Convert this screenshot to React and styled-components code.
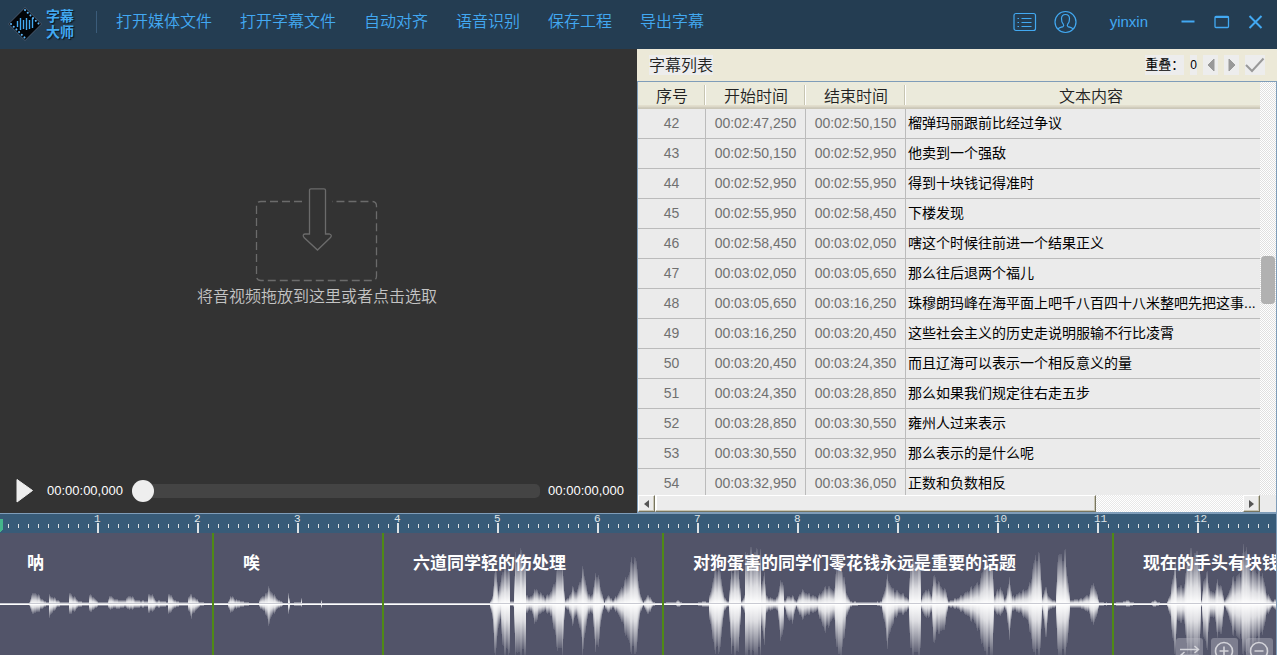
import React, { useEffect, useState } from 'react';
import styled, { createGlobalStyle } from 'styled-components';

const Global = createGlobalStyle`
  *, *::before, *::after { box-sizing: border-box; }
  html, body, #root { height: 100%; }
  body {
    margin: 0;
    overflow: hidden;
    font-family: "Liberation Sans", "Noto Sans CJK SC", sans-serif;
    font-size: 14px;
  }
  button {
    font: inherit;
    color: inherit;
    background: none;
    border: 0;
    padding: 0;
    display: flex;
    align-items: center;
    justify-content: center;
    cursor: pointer;
  }
  svg { display: block; flex: none; }
`;

const blue = '#42a9f2';
const frame = '#7f9db9';

const Shell = styled.div`
  height: 100vh;
  min-height: 400px;
  display: flex;
  flex-direction: column;
  overflow: hidden;
`;

/* Top bar */
const TopBar = styled.header`
  flex: none;
  height: 49px;
  padding: 0 13px 5px 8px;
  display: flex;
  align-items: center;
  background: #243d52;
  color: ${blue};
`;

const Brand = styled.div`
  display: flex;
  align-items: center;
  gap: 4px;
  padding: 4px 22px 0 0;
`;

const BrandName = styled.span`
  width: 28px;
  font-size: 14px;
  line-height: 16px;
  font-weight: 700;
  text-shadow: 1px 1px 1px #0b1620;
`;

const Divider = styled.span`
  width: 1px;
  height: 22px;
  margin-right: 19px;
  background: #3b5c7a;
`;

const Menu = styled.nav`
  display: flex;
  gap: 28px;
  flex: 1;
`;

const MenuButton = styled.button`
  font-size: 16px;
  line-height: 24px;
  font-weight: 350;
  white-space: nowrap;
`;

const Account = styled.div`
  display: flex;
  align-items: center;
  gap: 32px;
`;

const IconGroup = styled.div`
  display: flex;
  align-items: center;
  gap: ${(p) => p.$gap}px;
`;

const UserName = styled.span`
  font-size: 15px;
  line-height: 24px;
`;

/* Work area */
const Workspace = styled.main`
  flex: 1;
  min-height: 0;
  display: grid;
  grid-template-columns: 1fr minmax(640px, 50%);
  grid-template-rows: minmax(0, 1fr);
`;

const VideoPanel = styled.section`
  display: flex;
  flex-direction: column;
  min-width: 0;
  background: #333;
`;

const DropArea = styled.button`
  && {
    flex: 1;
    width: 100%;
    flex-direction: column;
    gap: 3px;
    padding: 0 3px 20px 0;
    font-size: 16px;
    line-height: 24px;
    font-weight: 350;
    color: #c4c4c4;
  }
`;

const Player = styled.div`
  flex: none;
  height: 46px;
  display: flex;
  align-items: center;
  padding: 2px 13px 0 16px;
  color: #fff;
`;

const PlayButton = styled.button`
  width: 18px;
  height: 26px;
  margin-right: 13px;
`;

const Time = styled.span`
  font-size: 13px;
  line-height: 20px;
`;

const Seek = styled.input`
  flex: 1;
  min-width: 0;
  height: 22px;
  margin: 0 8px 0 9px;
  appearance: none;
  background: none;
  &::-webkit-slider-runnable-track {
    height: 14px;
    border-radius: 5px;
    background: #444;
  }
  &::-webkit-slider-thumb {
    appearance: none;
    width: 22px;
    height: 22px;
    margin-top: -4px;
    border-radius: 50%;
    background: #eee;
  }
`;

/* Subtitle list */
const ListPanel = styled.section`
  display: flex;
  flex-direction: column;
  min-width: 0;
  min-height: 0;
  background: #ece9d8;
`;

const ListHead = styled.div`
  flex: none;
  height: 32px;
  display: flex;
  align-items: center;
  padding: 0 12px;
`;

const ListTitle = styled.h2`
  margin: 0 auto 0 0;
  padding-top: 2px;
  font-size: 16px;
  line-height: 18px;
  font-weight: 350;
  color: #222;
  background: #ededed;
`;

const Overlap = styled.span`
  font-size: 13px;
  line-height: 20px;
  color: #000;
  background: #ededed;
  margin-right: 6px;
`;

const OverlapCount = styled(Overlap)`
  font-size: 12px;
`;

const HeadButton = styled.button`
  width: ${(p) => p.$width}px;
  height: 20px;
  && { background: #ededed; }
`;

const Grid = styled.div`
  flex: 1;
  min-height: 0;
  display: grid;
  grid-template-columns: minmax(0, 1fr) 16px;
  grid-template-rows: minmax(0, 1fr) 17px;
  border: 1px solid ${frame};
  background: #ebebeb;
`;

const TableView = styled.div`
  overflow: hidden;
`;

const Table = styled.table`
  width: 100%;
  table-layout: fixed;
  border-collapse: separate;
  border-spacing: 0;
`;

const Th = styled.th`
  position: relative;
  width: ${(p) => p.$width || 'auto'};
  height: 27px;
  padding: 2px 0 0;
  font-size: 16px;
  line-height: 22px;
  font-weight: 350;
  color: #222;
  background: linear-gradient(#ebeadb 23px, #e2decd 23px, #e2decd 24px, #d6d2c2 25px, #cbc7b8 26px);
  &:last-child { padding-left: 16px; }
  &:not(:last-child)::after {
    content: "";
    position: absolute;
    top: 3px;
    right: 0;
    width: 2px;
    height: 20px;
    background: linear-gradient(90deg, #c7c5b2 1px, #fff 1px);
  }
`;

const Td = styled.td`
  height: 30px;
  padding: ${(p) => (p.$text ? '0 0 2px 2px' : '0 0 2px')};
  border-bottom: 1px solid #bbb;
  border-right: ${(p) => (p.$text ? '0' : '1px solid #bbb')};
  font-size: 14px;
  line-height: 20px;
  text-align: ${(p) => (p.$text ? 'left' : 'center')};
  color: ${(p) => (p.$text ? '#000' : '#707070')};
  white-space: nowrap;
  overflow: hidden;
`;

const VTrack = styled.div`
  background: repeating-conic-gradient(#fff 0 25%, #e0e0e0 0 50%) 0 0 / 2px 2px;
  display: grid;
  grid-template-rows: 174fr 48px 191fr;
`;

const VThumb = styled.div`
  grid-row: 2;
  margin: 0 1px;
  border-radius: 4px;
  background: #b1b1b1;
`;

const HTrack = styled.div`
  display: grid;
  grid-template-columns: 17px 3fr 1fr 17px;
  background: repeating-conic-gradient(#fff 0 25%, #e8e8e8 0 50%) 0 0 / 2px 2px;
`;

const ScrollButton = styled.button`
  && {
    border: 1px solid;
    border-color: #fff #77755f #77755f #fff;
    background: #ececec;
    box-shadow: inset -1px -1px #c9c6b4;
  }
  &:last-child { grid-column: 4; }
`;

const HThumb = styled.div`
  border: 1px solid;
  border-color: #fff #77755f #77755f #fff;
  background: #ececec;
  box-shadow: inset -1px -1px #c9c6b4, inset 1px 0 #fff;
`;

/* Timeline */
const Timeline = styled.section`
  position: relative;
  flex: none;
  height: 142px;
  overflow: hidden;
  border-top: 1px solid ${frame};
  border-right: 1px solid ${frame};
  background: #525469;
`;

const Ruler = styled.div`
  height: 19px;
  overflow: hidden;
  background: #385b78;
`;

const WaveArea = styled.div`
  position: relative;
  height: 122px;
  overflow: hidden;
`;

const Segments = styled.div`
  position: absolute;
  inset: 0 0 0 -2px;
  display: flex;
`;

const Segment = styled.div`
  flex: ${(p) => (p.$width ? `0 0 ${p.$width}px` : '1 0 170px')};
  padding: 19px 0 0 29px;
  border-right: ${(p) => (p.$width ? '2px solid #4f8a14' : '0')};
  font-size: 17px;
  line-height: 24px;
  font-weight: 700;
  color: #fff;
  white-space: nowrap;
`;

const WaveTools = styled.div`
  position: absolute;
  right: 3px;
  bottom: -11px;
  display: flex;
  gap: 8px;
`;

const WaveButton = styled.button`
  width: 27px;
  height: 28px;
  && {
    border-radius: 3px;
    background: rgba(190, 190, 200, 0.4);
  }
`;

const menu = ['打开媒体文件', '打开字幕文件', '自动对齐', '语音识别', '保存工程', '导出字幕'];

const rows = [
  [42, '00:02:47,250', '00:02:50,150', '榴弹玛丽跟前比经过争议'],
  [43, '00:02:50,150', '00:02:52,950', '他卖到一个强敌'],
  [44, '00:02:52,950', '00:02:55,950', '得到十块钱记得准时'],
  [45, '00:02:55,950', '00:02:58,450', '下楼发现'],
  [46, '00:02:58,450', '00:03:02,050', '嗐这个时候往前进一个结果正义'],
  [47, '00:03:02,050', '00:03:05,650', '那么往后退两个福儿'],
  [48, '00:03:05,650', '00:03:16,250', '珠穆朗玛峰在海平面上吧千八百四十八米整吧先把这事...'],
  [49, '00:03:16,250', '00:03:20,450', '这些社会主义的历史走说明服输不行比凌霄'],
  [50, '00:03:20,450', '00:03:24,350', '而且辽海可以表示一个相反意义的量'],
  [51, '00:03:24,350', '00:03:28,850', '那么如果我们规定往右走五步'],
  [52, '00:03:28,850', '00:03:30,550', '雍州人过来表示'],
  [53, '00:03:30,550', '00:03:32,950', '那么表示的是什么呢'],
  [54, '00:03:32,950', '00:03:36,050', '正数和负数相反'],
];

const segments = [
  { width: 216, text: '呐' },
  { width: 170, text: '唉' },
  { width: 280, text: '六道同学轻的伤处理' },
  { width: 450, text: '对狗蛋害的同学们零花钱永远是重要的话题' },
  { width: 0, text: '现在的手头有块钱' },
];

/* Loudness envelope: position, height above the axis, height below it */
const envelope = [
  [0, 0, 0], [28, 0, 0], [29, 2, 2], [31, 10, 9], [36, 11, 9], [40, 7, 6], [44, 3, 3], [48, 2, 2], [49, 9, 13], [52, 7, 9],
  [56, 5, 4], [60, 2, 2], [68, 2, 2], [69, 11, 10], [73, 8, 8], [78, 3, 3], [88, 2, 2], [89, 10, 8], [93, 7, 6], [98, 2, 2],
  [107, 2, 2], [109, 9, 6], [113, 6, 4], [118, 4, 5], [124, 4, 3], [130, 9, 6], [135, 4, 4], [147, 3, 3], [148, 9, 8],
  [152, 10, 8], [155, 4, 4], [167, 2, 2], [168, 9, 9], [171, 9, 8], [174, 4, 4], [180, 2, 2], [187, 2, 2], [188, 8, 7],
  [191, 9, 13], [195, 6, 7], [200, 2, 2], [208, 1, 1], [214, 0, 0], [227, 1, 1], [230, 8, 9], [235, 5, 5], [240, 3, 3],
  [250, 1, 1], [258, 1, 1], [260, 7, 5], [264, 8, 7], [268, 16, 20], [272, 11, 11], [278, 4, 4], [284, 1, 1], [287, 1, 1],
  [288, 11, 10], [290, 1, 1], [300, 2, 2], [301, 5, 3], [302, 1, 1], [320, 1, 1], [321, 4, 4], [322, 0, 0],
  [489, 0, 0], [492, 8, 15], [494, 28, 45], [496, 38, 50], [498, 12, 22], [500, 22, 15], [502, 35, 45], [508, 38, 50],
  [509, 34, 48], [510, 3, 2], [513, 3, 3], [515, 47, 50], [520, 50, 51], [525, 45, 50], [526, 9, 9], [531, 7, 6],
  [534, 15, 20], [540, 11, 9], [545, 7, 7], [551, 13, 12], [555, 25, 35], [558, 38, 46], [562, 36, 46], [565, 4, 4],
  [568, 6, 6], [572, 16, 20], [576, 12, 11], [579, 20, 22], [582, 35, 46], [585, 25, 30], [588, 9, 9], [592, 10, 10],
  [595, 30, 46], [597, 30, 46], [602, 10, 10], [604, 2, 2], [607, 9, 9], [613, 4, 4], [620, 14, 14], [628, 30, 38],
  [632, 46, 48], [636, 42, 47], [640, 9, 8], [643, 2, 2], [648, 10, 11], [652, 3, 3], [656, 1, 1], [675, 2, 1],
  [678, 4, 3], [682, 1, 1], [697, 1, 1], [702, 3, 3], [708, 2, 3], [709, 8, 14], [712, 22, 35], [716, 38, 49],
  [720, 32, 43], [724, 6, 6], [728, 3, 3], [731, 34, 47], [738, 38, 50], [741, 3, 3], [744, 8, 8], [745, 49, 50],
  [755, 52, 51], [760, 50, 48], [761, 18, 20], [764, 34, 44], [766, 8, 8], [773, 5, 5], [777, 7, 6], [780, 25, 38],
  [783, 17, 24], [784, 4, 4], [788, 8, 16], [792, 8, 18], [796, 3, 3], [801, 14, 15], [810, 9, 9], [817, 7, 7],
  [821, 12, 20], [825, 17, 27], [830, 16, 18], [834, 14, 14], [836, 40, 48], [842, 36, 48], [846, 12, 14], [850, 3, 3],
  [860, 2, 1], [875, 2, 1], [881, 3, 3], [883, 10, 14], [887, 27, 40], [892, 15, 20], [898, 12, 9], [904, 9, 10],
  [908, 5, 5], [910, 44, 50], [920, 46, 50], [921, 6, 6], [926, 16, 15], [931, 9, 9], [933, 28, 38], [938, 21, 27],
  [943, 15, 28], [946, 13, 14], [948, 3, 3], [957, 6, 5], [965, 11, 10], [975, 19, 20], [980, 24, 32], [984, 42, 49],
  [992, 40, 49], [994, 9, 8], [1000, 17, 12], [1004, 6, 5], [1006, 8, 8], [1009, 27, 36], [1012, 7, 6], [1020, 12, 9],
  [1028, 16, 18], [1031, 28, 40], [1035, 48, 50], [1040, 45, 48], [1042, 7, 7], [1046, 19, 38], [1048, 7, 6],
  [1055, 3, 3], [1057, 47, 50], [1065, 49, 51], [1067, 30, 42], [1070, 4, 4], [1080, 5, 4], [1088, 9, 8], [1093, 22, 22],
  [1096, 12, 12], [1099, 2, 2], [1110, 1, 1], [1122, 2, 2], [1127, 4, 3], [1134, 1, 1], [1150, 1, 1], [1154, 4, 3],
  [1160, 1, 1], [1166, 1, 1], [1170, 10, 12], [1172, 28, 38], [1175, 40, 48], [1177, 17, 17], [1184, 18, 18],
  [1187, 50, 50], [1199, 50, 51], [1201, 4, 3], [1203, 24, 35], [1207, 30, 42], [1210, 12, 12], [1214, 12, 14],
  [1217, 22, 30], [1221, 18, 30], [1224, 4, 3], [1227, 8, 8], [1232, 24, 28], [1240, 30, 34], [1243, 54, 50],
  [1246, 58, 51], [1249, 38, 42], [1262, 30, 30], [1266, 12, 12], [1272, 3, 3], [1277, 6, 7],
];

const bars = [];
for (let i = 0; i < envelope.length - 1; i += 1) {
  const [x0, u0, d0] = envelope[i];
  const [x1, u1, d1] = envelope[i + 1];
  for (let x = x0; x < x1; x += 1) {
    const t = (x - x0) / (x1 - x0);
    const noise = 1 + 0.12 * Math.sin(Math.floor(x / 2) * 2.4);
    const up = (u0 + (u1 - u0) * t) * noise;
    const down = Math.min(51, (d0 + (d1 - d0) * t) * noise);
    if (up > 0.5 || down > 0.5) bars.push({ x, up: Math.round(up), down: Math.round(down) });
  }
}

const Waveform = () => (
  <svg width="100%" height="122" shapeRendering="crispEdges" aria-hidden="true">
    <defs>
      <linearGradient id="fadeUp" x1="0" y1="1" x2="0" y2="0">
        <stop offset="0" stopColor="#fff" />
        <stop offset="0.35" stopColor="#fff" stopOpacity="0.8" />
        <stop offset="1" stopColor="#fff" stopOpacity="0.08" />
      </linearGradient>
      <linearGradient id="fadeDown" x1="0" y1="0" x2="0" y2="1">
        <stop offset="0" stopColor="#fff" />
        <stop offset="0.35" stopColor="#fff" stopOpacity="0.8" />
        <stop offset="1" stopColor="#fff" stopOpacity="0.08" />
      </linearGradient>
    </defs>
    {bars.map((b) => (
      <g key={b.x}>
        <rect x={b.x} y={71 - b.up} width="1" height={b.up} fill="url(#fadeUp)" />
        <rect x={b.x} y={71} width="1" height={b.down} fill="url(#fadeDown)" />
      </g>
    ))}
    <rect y="70" width="100%" height="1" fill="#c9cad2" />
    <rect y="71" width="100%" height="1" fill="#fff" />
  </svg>
);

const useWindowWidth = () => {
  const [width, setWidth] = useState(window.innerWidth);
  useEffect(() => {
    const update = () => setWidth(window.innerWidth);
    window.addEventListener('resize', update);
    return () => window.removeEventListener('resize', update);
  }, []);
  return width;
};

const RulerScale = () => {
  const ticks = Math.floor(useWindowWidth() / 10);
  return (
    <svg width="100%" height="19" fill="#dfe3e6" shapeRendering="crispEdges">
      {Array.from({ length: ticks }, (_, i) => {
        const n = i + 1;
        const x = n * 10 - 2;
        return n % 10 ? (
          <rect key={n} x={x} y="10" width="1" height="4" />
        ) : (
          <g key={n}>
            <rect x={x - 1} y="9" width="2" height="10" />
            <text x={x - 4} y="8" fontFamily='"Liberation Mono", monospace' fontSize="11">{n / 10}</text>
          </g>
        );
      })}
      <path d="M0 5h3v10l-2 3H0z" fill="#45b58c" />
    </svg>
  );
};

const Logo = () => (
  <svg width="34" height="34" viewBox="0 0 34 34">
    <path d="M17 0 34 17 17 34 0 17z" fill="#46576a" />
    <path d="M17 1 33 17 17 33 1 17z" fill="#020407" />
    <path d="M9.500 14v6M12.500 11v12M15.500 13v9M18.500 11v12M21.500 13v9M24.500 11v10" stroke={blue} strokeWidth="1.4" />
    <path d="M17 3 31 17M3 17 17 31" stroke="#5bb4f5" strokeWidth="2" strokeLinecap="round" strokeDasharray="0.100 3.700" fill="none" />
  </svg>
);

const ListIcon = () => (
  <svg width="24" height="24" viewBox="0 0 24 24" fill="none" stroke={blue} strokeWidth="1.200">
    <rect x="1" y="3.500" width="21.500" height="17" rx="2" />
    <path d="M4.500 8.500H6M4.500 12.500H6M4.500 16.500H6M8.500 8.500h10M8.500 12.500h10M8.500 16.500h10" />
  </svg>
);

const UserIcon = () => (
  <svg width="24" height="24" viewBox="0 0 24 24" fill="none" stroke={blue} strokeWidth="1.200">
    <circle cx="11.500" cy="12" r="10.500" />
    <path d="M4 19c1-1.500 4-1.800 5.200-2.600.7-.6.500-1.700 0-2.400C7.800 12.600 7.500 10.800 7.500 8.800c0-2.800 1.700-4.300 4-4.300s4 1.500 4 4.300c0 2-.3 3.800-1.700 5.200-.5.700-.7 1.800 0 2.400 1.200.8 4.200 1.100 5.200 2.600" />
  </svg>
);

const DropIcon = () => (
  <svg width="124" height="94" viewBox="0 0 124 94" fill="none" stroke="#6b6b6b">
    <path d="M47 13.500H6q-4.500 0-4.500 4.500v70q0 4.500 4.500 4.500h111q4.500 0 4.500-4.500V18q0-4.500-4.500-4.500H77" strokeDasharray="8 4" strokeWidth="1.300" />
    <path d="M56 .8h13q1.500 0 1.500 1.500V46h4q3 1 1 3.500L62.500 62 49 49.500q-2-3 1-3.500h4.500V2.300q0-1.500 1.500-1.500z" strokeWidth="1.300" />
  </svg>
);

export default function App() {
  return (
    <Shell>
      <Global />
      <TopBar>
        <Brand>
          <Logo />
          <BrandName>字幕大师</BrandName>
        </Brand>
        <Divider />
        <Menu>
          {menu.map((m) => <MenuButton key={m}>{m}</MenuButton>)}
        </Menu>
        <Account>
          <IconGroup $gap={17}>
            <button aria-label="列表"><ListIcon /></button>
            <button aria-label="用户"><UserIcon /></button>
          </IconGroup>
          <UserName>yinxin</UserName>
          <IconGroup $gap={18}>
            <button aria-label="最小化">
              <svg width="16" height="16" viewBox="0 0 16 16"><path d="M1.500 7.500h13" stroke={blue} strokeWidth="2" /></svg>
            </button>
            <button aria-label="最大化">
              <svg width="16" height="16" viewBox="0 0 16 16" fill="none" stroke={blue}>
                <rect x="1" y="2.500" width="13.500" height="11" rx="1" strokeWidth="1.300" />
                <path d="M1 3h13.500" strokeWidth="2" />
              </svg>
            </button>
            <button aria-label="关闭">
              <svg width="16" height="16" viewBox="0 0 16 16"><path d="m1.500 2 12 12m0-12-12 12" stroke={blue} strokeWidth="2" /></svg>
            </button>
          </IconGroup>
        </Account>
      </TopBar>

      <Workspace>
        <VideoPanel>
          <DropArea>
            <DropIcon />
            <span>将音视频拖放到这里或者点击选取</span>
          </DropArea>
          <Player>
            <PlayButton aria-label="播放">
              <svg width="18" height="26" viewBox="0 0 18 26"><path d="M1 1.500 16.500 12.500 1 24z" fill="#eee" stroke="#eee" strokeLinejoin="round" /></svg>
            </PlayButton>
            <Time>00:00:00,000</Time>
            <Seek type="range" min="0" max="100" defaultValue="0" aria-label="播放进度" />
            <Time>00:00:00,000</Time>
          </Player>
        </VideoPanel>

        <ListPanel>
          <ListHead>
            <ListTitle>字幕列表</ListTitle>
            <Overlap>重叠：</Overlap>
            <OverlapCount>0</OverlapCount>
            <IconGroup $gap={6}>
              <HeadButton $width={15} aria-label="上一个">
                <svg width="8" height="14" viewBox="0 0 8 14"><path d="M7 1v12L1 7z" fill="#999" stroke="#999" strokeLinejoin="round" /></svg>
              </HeadButton>
              <HeadButton $width={15} aria-label="下一个">
                <svg width="8" height="14" viewBox="0 0 8 14"><path d="M1 1v12l6-6z" fill="#999" stroke="#999" strokeLinejoin="round" /></svg>
              </HeadButton>
              <HeadButton $width={20} aria-label="确认">
                <svg width="20" height="20" viewBox="0 0 20 20"><path d="m1 10 6 6L18.500 3.500" fill="none" stroke="#999" strokeWidth="2" /></svg>
              </HeadButton>
            </IconGroup>
          </ListHead>
          <Grid>
            <TableView>
              <Table>
                <thead>
                  <tr>
                    <Th $width="68px">序号</Th>
                    <Th $width="100px">开始时间</Th>
                    <Th $width="100px">结束时间</Th>
                    <Th>文本内容</Th>
                  </tr>
                </thead>
                <tbody>
                  {rows.map(([n, start, end, text]) => (
                    <tr key={n}>
                      <Td>{n}</Td>
                      <Td>{start}</Td>
                      <Td>{end}</Td>
                      <Td $text>{text}</Td>
                    </tr>
                  ))}
                </tbody>
              </Table>
            </TableView>
            <VTrack><VThumb /></VTrack>
            <HTrack>
              <ScrollButton aria-label="向左滚动">
                <svg width="5" height="8" viewBox="0 0 5 8"><path d="M5 0v8L0 4z" fill="#555" /></svg>
              </ScrollButton>
              <HThumb />
              <ScrollButton aria-label="向右滚动">
                <svg width="5" height="8" viewBox="0 0 5 8"><path d="M0 0v8l5-4z" fill="#555" /></svg>
              </ScrollButton>
            </HTrack>
          </Grid>
        </ListPanel>
      </Workspace>

      <Timeline>
        <Ruler><RulerScale /></Ruler>
        <WaveArea>
          <Waveform />
          <Segments>
            {segments.map((s) => <Segment key={s.text} $width={s.width}>{s.text}</Segment>)}
          </Segments>
          <WaveTools>
            <WaveButton aria-label="切换">
              <svg width="27" height="28" viewBox="0 0 27 28" fill="none" stroke="#d4d4da" strokeWidth="1.500"><path d="M4 11.500h18M18.500 8l4 3.500-4 3.500M23 17.500H5M8.500 14l-4 3.500 4 3.500" /></svg>
            </WaveButton>
            <WaveButton aria-label="放大">
              <svg width="27" height="28" viewBox="0 0 27 28" fill="none" stroke="#d4d4da" strokeWidth="1.600"><circle cx="13" cy="13" r="8.500" /><path d="M8.500 13h9M13 8.500v9M19 19l5 5" /></svg>
            </WaveButton>
            <WaveButton aria-label="缩小">
              <svg width="27" height="28" viewBox="0 0 27 28" fill="none" stroke="#d4d4da" strokeWidth="1.600"><circle cx="13" cy="13" r="8.500" /><path d="M8.500 13h9M19 19l5 5" /></svg>
            </WaveButton>
          </WaveTools>
        </WaveArea>
      </Timeline>
    </Shell>
  );
}
